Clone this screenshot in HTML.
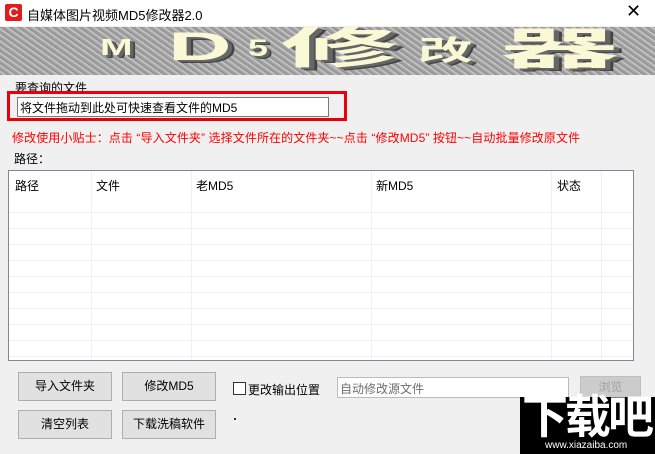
<!DOCTYPE html>
<html><head><meta charset="utf-8"><style>
*{margin:0;padding:0;box-sizing:border-box}
body{width:655px;height:454px;background:#f0f0f0;font-family:"Liberation Sans","Noto Sans CJK SC",sans-serif;font-size:12px;color:#000;position:relative;overflow:hidden}
.a{position:absolute}
.title{left:0;top:0;width:655px;height:26px;background:#fff}
.btn{position:absolute;background:#e1e1e1;border:1px solid #adadad;text-align:center;font-size:12px}
.banner{left:0;top:27px;width:655px;height:48px;background:repeating-linear-gradient(35deg,#a0a0a0 0 2px,#c0c0c0 2px 4px,#8e8e8e 4px 5px);overflow:hidden}
.bt{position:absolute;color:#fbf8d6;font-weight:bold;font-family:"Liberation Sans","Noto Sans CJK SC",sans-serif;text-shadow:2px 2px 0 #666,3px 3px 0 #444;transform-origin:0 0;line-height:1}
.tbl{left:8px;top:170px;width:626px;height:191px;background:#fff;border:1px solid #828790}
.th{position:absolute;top:6px;font-size:12px}
.vs{position:absolute;top:0;width:1px;height:189px;background:#f0f0f0}
.hs{position:absolute;left:0;width:624px;height:1px;background:#f0f0f0}
</style></head><body>
<div class="a title"></div>
<div class="a" style="left:5px;top:4px;width:17px;height:17px;background:#e01c1c;border-radius:2px;color:#fff;font-weight:bold;font-size:14px;line-height:17px;text-align:center">C</div>
<div class="a" style="left:27px;top:5px;font-size:13px">自媒体图片视频MD5修改器2.0</div>
<div class="a" style="left:626px;top:1px;font-size:18px;font-weight:300">✕</div>
<div class="a banner">
<div class="bt" style="left:100px;top:9px;font-size:23px;transform:scaleX(1.7)">M</div>
<div class="bt" style="left:168px;top:0px;font-size:40px;transform:scaleX(2.2)">D</div>
<div class="bt" style="left:248px;top:10px;font-size:24px;transform:scaleX(1.5)">5</div>
<div class="bt" style="left:280px;top:0px;font-size:44px;transform:scaleX(2.7)">修</div>
<div class="bt" style="left:418px;top:10px;font-size:28px;transform:scaleX(1.95)">改</div>
<div class="bt" style="left:500px;top:1px;font-size:44px;transform:scaleX(2.7)">器</div>
</div>
<div class="a" style="left:15px;top:79px;font-size:12px">要查询的文件</div>
<div class="a" style="left:7px;top:91px;width:340px;height:30px;border:3px solid #e8000b"></div>
<div class="a" style="left:17px;top:97px;width:312px;height:20px;background:#fff;border:1px solid #7a7a7a;padding:1px 2px;font-size:12px">将文件拖动到此处可快速查看文件的MD5</div>
<div class="a" style="left:12px;top:129px;color:#ff0000;font-size:12px;letter-spacing:0.1px">修改使用小贴士：点击 “导入文件夹” 选择文件所在的文件夹~~点击 “修改MD5” 按钮~~自动批量修改原文件</div>
<div class="a" style="left:14px;top:150px">路径：</div>
<div class="a tbl">
<div class="th" style="left:6px">路径</div><div class="th" style="left:87px">文件</div><div class="th" style="left:187px">老MD5</div><div class="th" style="left:367px">新MD5</div><div class="th" style="left:548px">状态</div>
<div class="vs" style="left:82px"></div><div class="vs" style="left:182px"></div><div class="vs" style="left:362px"></div><div class="vs" style="left:542px"></div><div class="vs" style="left:592px"></div>
<div class="hs" style="top:41px"></div><div class="hs" style="top:57px"></div><div class="hs" style="top:73px"></div><div class="hs" style="top:89px"></div><div class="hs" style="top:105px"></div><div class="hs" style="top:121px"></div><div class="hs" style="top:137px"></div><div class="hs" style="top:153px"></div><div class="hs" style="top:169px"></div><div class="hs" style="top:185px"></div>
</div>
<div class="btn" style="left:18px;top:372px;width:94px;height:29px;line-height:27px">导入文件夹</div>
<div class="btn" style="left:122px;top:372px;width:94px;height:29px;line-height:27px">修改MD5</div>
<div class="btn" style="left:18px;top:410px;width:94px;height:29px;line-height:27px">清空列表</div>
<div class="btn" style="left:122px;top:410px;width:94px;height:29px;line-height:27px">下载洗稿软件</div>
<div class="a" style="left:233px;top:382px;width:13px;height:13px;background:#fff;border:1px solid #333"></div>
<div class="a" style="left:248px;top:381px;font-size:12px">更改输出位置</div>
<div class="a" style="left:337px;top:377px;width:232px;height:21px;background:#fff;border:1px solid #bbb;color:#6d6d6d;padding:2px 2px;font-size:12px">自动修改源文件</div>
<div class="btn" style="left:580px;top:376px;width:61px;height:22px;line-height:20px;color:#a0a0a0;background:#ccc;border-color:#bfbfbf">浏览</div>
<div class="a" style="left:234px;top:418px;width:2px;height:2px;background:#333"></div>
<div class="a" style="left:520px;top:397px;width:135px;height:57px;background:#000"></div>
<div class="a" style="left:522px;top:392px;color:#fff;font-size:46px;font-weight:bold;letter-spacing:-3px;line-height:50px">下载吧</div>
<div class="a" style="left:545px;top:440px;color:#fff;font-size:10px">www.xiazaiba.com</div>
</body></html>
